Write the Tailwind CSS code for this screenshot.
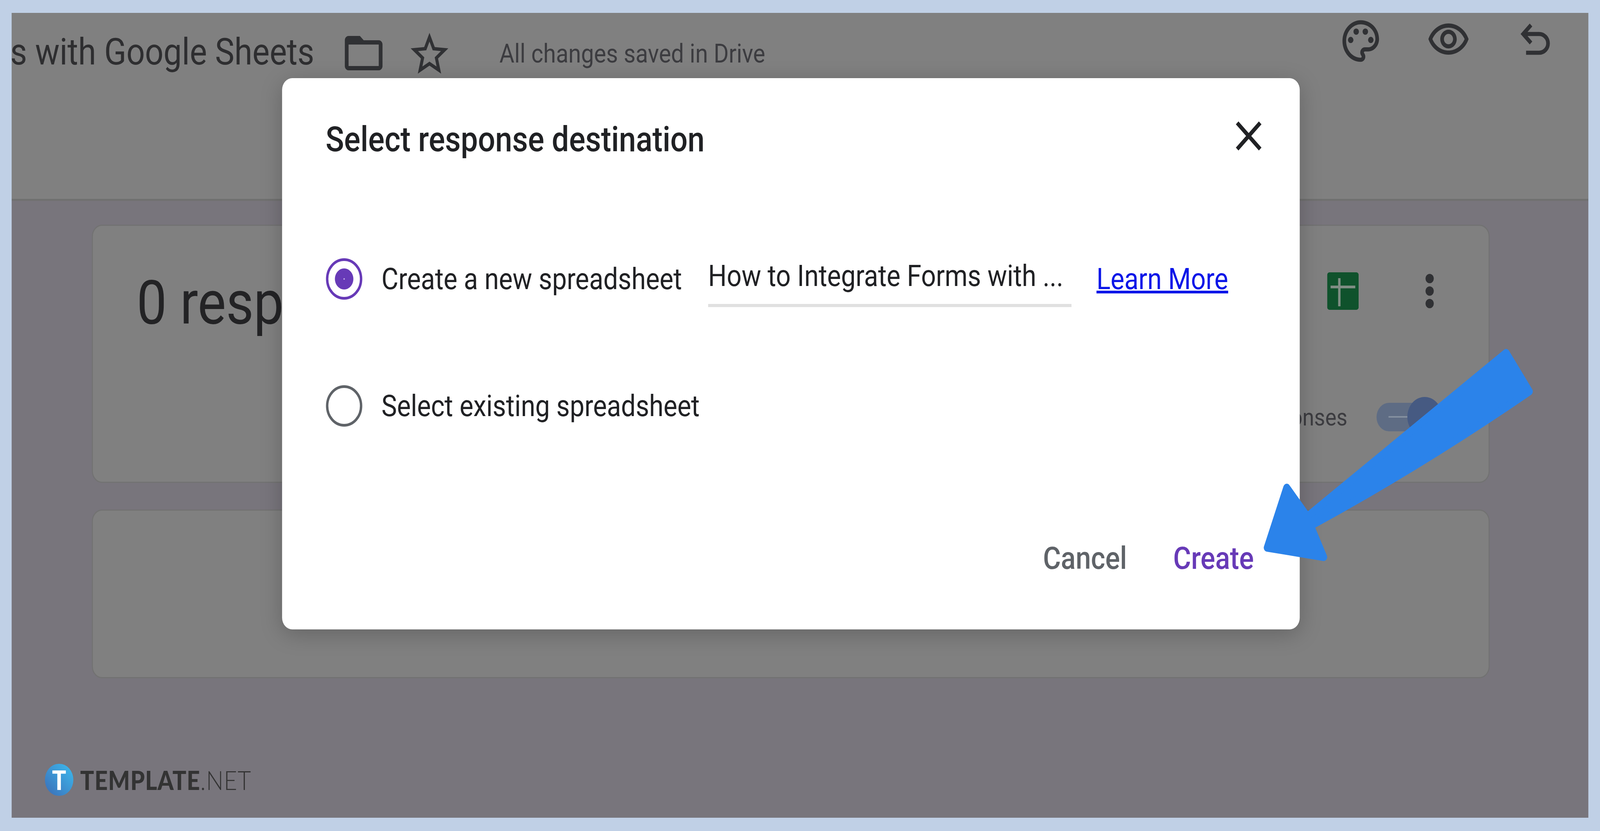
<!doctype html>
<html>
<head>
    <meta charset="UTF-8" />
    <title>Select response destination</title>
    <script src="https://cdn.jsdelivr.net/npm/@tailwindcss/browser@4"></script>
</head>
<body class="m-0 overflow-hidden bg-[#c0d0e6]">
<div class="relative w-screen h-screen overflow-hidden">
<div id="page" class="absolute left-0 top-0 w-[4668px] h-[2127px] origin-top-left overflow-hidden bg-[#c0d0e6] pl-[34px] pt-[33px] font-[Roboto]">
    <div class="relative w-[4600px] h-[2060px] overflow-hidden bg-[#78757c]">

        <!-- form header -->
        <header class="flex items-start w-full h-[481px] bg-[#808080] border-b-[5px] border-[#707070] text-[#303134]">
            <div class="w-[883px] h-[200px] flex justify-end items-center overflow-hidden">
                <span class="whitespace-nowrap text-[95px] text-[#2e2e30]">How to Integrate Forms with Google Sheets</span>
            </div>
            <svg class="w-[132px] h-[132px] ml-[78px] mt-[37px]" viewBox="0 0 24 24" fill="#303134"><path d="M20 6h-8l-2-2H4c-1.1 0-1.99.9-1.99 2L2 18c0 1.1.9 2 2 2h16c1.1 0 2-.9 2-2V8c0-1.1-.9-2-2-2zm0 12H4V8h16v10z"/></svg>
            <svg class="w-[132px] h-[132px] ml-[60px] mt-[40px]" viewBox="0 0 24 24" fill="#303134"><path d="M22 9.24l-7.19-.62L12 2 9.19 8.63 2 9.24l5.46 4.73L5.82 21 12 17.27 18.18 21l-1.64-7.03L22 9.24zM12 15.4l-3.76 2.27 1-4.28-3.32-2.88 4.38-.38L12 6.1l1.71 4.04 4.38.38-3.32 2.88 1 4.28L12 15.4z"/></svg>
            <span class="ml-[138px] mt-[70px] whitespace-nowrap text-[67px] leading-[68px] text-[#3c3c40]">All changes saved in Drive</span>
            <div class="ml-auto flex items-start pr-[91px]">
                <svg class="w-[128px] h-[128px] mt-[8px]" viewBox="0 0 24 24" fill="#303134">
                    <path d="M12 22C6.49 22 2 17.51 2 12S6.49 2 12 2s10 4.04 10 9c0 3.31-2.69 6-6 6h-1.77c-.28 0-.5.22-.5.5 0 .12.05.23.13.33.41.47.64 1.06.64 1.67 0 1.38-1.12 2.5-2.5 2.5zm0-18c-4.41 0-8 3.59-8 8s3.59 8 8 8c.28 0 .5-.22.5-.5 0-.16-.08-.28-.14-.35-.41-.46-.63-1.05-.63-1.65 0-1.38 1.12-2.5 2.5-2.5H16c2.21 0 4-1.79 4-4 0-3.86-3.59-7-8-7z"/>
                    <circle cx="6.5" cy="11.5" r="1.5"/><circle cx="9.5" cy="7.5" r="1.5"/><circle cx="14.5" cy="7.5" r="1.5"/><circle cx="17.5" cy="11.5" r="1.5"/>
                </svg>
                <svg class="w-[128px] h-[128px] ml-[128px] mt-[3px]" viewBox="0 0 24 24" fill="#303134"><path d="M12 6.5c3.79 0 7.17 2.13 8.82 5.5-1.65 3.37-5.02 5.5-8.82 5.5S4.83 15.37 3.18 12C4.83 8.63 8.21 6.5 12 6.5m0-2C7 4.5 2.73 7.61 1 12c1.73 4.39 6 7.5 11 7.5s9.27-3.11 11-7.5c-1.73-4.39-6-7.5-11-7.5zm0 5c1.38 0 2.5 1.12 2.5 2.5s-1.12 2.5-2.5 2.5-2.5-1.12-2.5-2.5 1.12-2.5 2.5-2.5m0-2c-2.48 0-4.5 2.02-4.5 4.5s2.02 4.5 4.5 4.5 4.5-2.02 4.5-4.5-2.02-4.5-4.5-4.5z"/></svg>
                <svg class="w-[128px] h-[128px] ml-[125px] mt-[6px]" viewBox="0 0 24 24" fill="#303134"><path d="M7 19v-2h7.1q1.575 0 2.737-1T18 13.5 16.837 11 14.1 10H7.8l2.6 2.6L9 14 4 9l5-5 1.4 1.4L7.8 8h6.3q2.425 0 4.163 1.575T20 13.5t-1.737 3.925T14.1 19Z"/></svg>
            </div>
        </header>

        <!-- responses cards behind the dialog -->
        <main class="flex flex-col gap-[68px] pt-[61px] pl-[234px] pr-[288px]">
            <section class="flex justify-between h-[661px] rounded-[30px] bg-[#808080] border-[3px] border-[#727272] pl-[128px]">
                <span class="mt-[122px] text-[156px] leading-[150px] whitespace-nowrap text-[#232325]">0 responses</span>
                <div class="flex flex-col items-end pt-[119px] pr-[136px]">
                    <div class="flex items-start">
                        <svg class="w-[92px] h-[96px]" viewBox="0 0 92 96">
                            <rect width="92" height="96" rx="7" fill="#0f522c"/>
                            <rect x="10" y="34" width="72" height="7" fill="#7f8d84"/>
                            <rect x="32" y="15" width="7" height="72" fill="#7f8d84"/>
                        </svg>
                        <div class="flex flex-col gap-[8px] ml-[195px] mr-[24px] pt-[4px]">
                            <span class="w-[24px] h-[24px] rounded-full bg-[#303134]"></span>
                            <span class="w-[24px] h-[24px] rounded-full bg-[#303134]"></span>
                            <span class="w-[24px] h-[24px] rounded-full bg-[#303134]"></span>
                        </div>
                    </div>
                    <div class="flex items-center mt-[228px]">
                        <span class="text-[62px] whitespace-nowrap text-[#3c3c40]">Accept responses</span>
                        <span class="relative w-[191px] h-[73px] ml-[85px] rounded-full bg-[#5e6c84]">
                            <span class="absolute left-[35px] top-[34px] w-[56px] h-[4px] bg-[#84909f]"></span>
                            <span class="absolute right-0 -top-[15px] w-[101px] h-[102px] rounded-full bg-[#465a82]"></span>
                        </span>
                    </div>
                </div>
            </section>
            <section class="h-[432px] rounded-[30px] bg-[#808080] border-[3px] border-[#727272]"></section>
        </main>

        <!-- logo -->
        <div class="absolute left-[97px] top-[1922px] flex items-center">
            <div class="flex items-center justify-center w-[83px] h-[82px] rounded-full bg-linear-to-tr from-[#3a6cb5] to-[#3abcf0]">
                <span class="font-['Lato'] font-black text-[68px] leading-none text-white">T</span>
            </div>
            <span class="ml-[20px] font-['Lato'] text-[67px] leading-none tracking-[1.2px] text-[#333333]"><b class="font-black">TEMPLATE</b><span class="font-light">.NET</span></span>
        </div>

        <!-- dialog -->
        <div class="absolute left-[789px] top-[167px] w-[2969px] h-[1411px] flex flex-col rounded-[30px] bg-white shadow-[0_12px_60px_rgba(0,0,0,0.22)]">
            <div class="flex items-center justify-between h-[314px] pl-[127px] pr-[85px]">
                <h1 class="text-[89px] font-medium whitespace-nowrap text-[#202124]">Select response destination</h1>
                <svg class="w-[128px] h-[128px] -mt-[18px]" viewBox="0 0 24 24" fill="#202124"><path d="M19 6.41L17.59 5 12 10.59 6.41 5 5 6.41 10.59 12 5 17.59 6.41 19 12 13.41 17.59 19 19 17.59 13.41 12z"/></svg>
            </div>
            <div class="flex items-center h-[400px] pl-[128px]">
                <span class="flex items-center justify-center shrink-0 w-[106px] h-[106px] rounded-full border-[7px] border-[#673ab7]">
                    <span class="flex items-center justify-center w-[54px] h-[54px] rounded-full bg-[#673ab7]">
                        <span class="w-[4px] h-[4px] rounded-full bg-[#c8b8e6]"></span>
                    </span>
                </span>
                <span class="ml-[56px] w-[953px] shrink-0 text-[76px] whitespace-nowrap text-[#202124]">Create a new spreadsheet</span>
                <div class="w-[1060px] shrink-0 h-[144px] pt-[14px] border-b-[8px] border-[#e0e0e0] text-[76px] leading-[100px] whitespace-nowrap text-[#202124] overflow-hidden">How to Integrate Forms with ...</div>
                <a class="ml-[73px] text-[76px] underline whitespace-nowrap text-[#0b16e8]" href="#">Learn More</a>
            </div>
            <div class="flex items-center h-[250px] pl-[128px]">
                <span class="shrink-0 w-[106px] h-[106px] rounded-full border-[7px] border-[#5f6368]"></span>
                <span class="ml-[56px] text-[76px] whitespace-nowrap text-[#202124]">Select existing spreadsheet</span>
            </div>
            <div class="flex items-center justify-end gap-[135px] h-[100px] mt-[215px] pr-[134px] text-[80px] font-medium">
                <span class="text-[#5f6368]">Cancel</span>
                <span class="text-[#673ab7]">Create</span>
            </div>
        </div>
    </div>

    <!-- arrow drawn over the screenshot -->
    <svg class="absolute left-0 top-0 w-[4668px] h-[2127px] max-w-none pointer-events-none" viewBox="0 0 4668 2127">
        <path d="M3754 1248 L3814 1322 L4394 903 L4462 1002 Q4150 1190 3824 1346 L3862 1426 L3697 1402 Z" fill="#2b83ea" stroke="#2b83ea" stroke-width="20" stroke-linejoin="round"/>
    </svg>
</div>
</div>
<script>
    // the window can come out narrower than the 4668px the page is drawn for
    document.getElementById("page").style.transform = "scaleX(" + window.innerWidth / 4668 + ")";
</script>
</body>
</html>
